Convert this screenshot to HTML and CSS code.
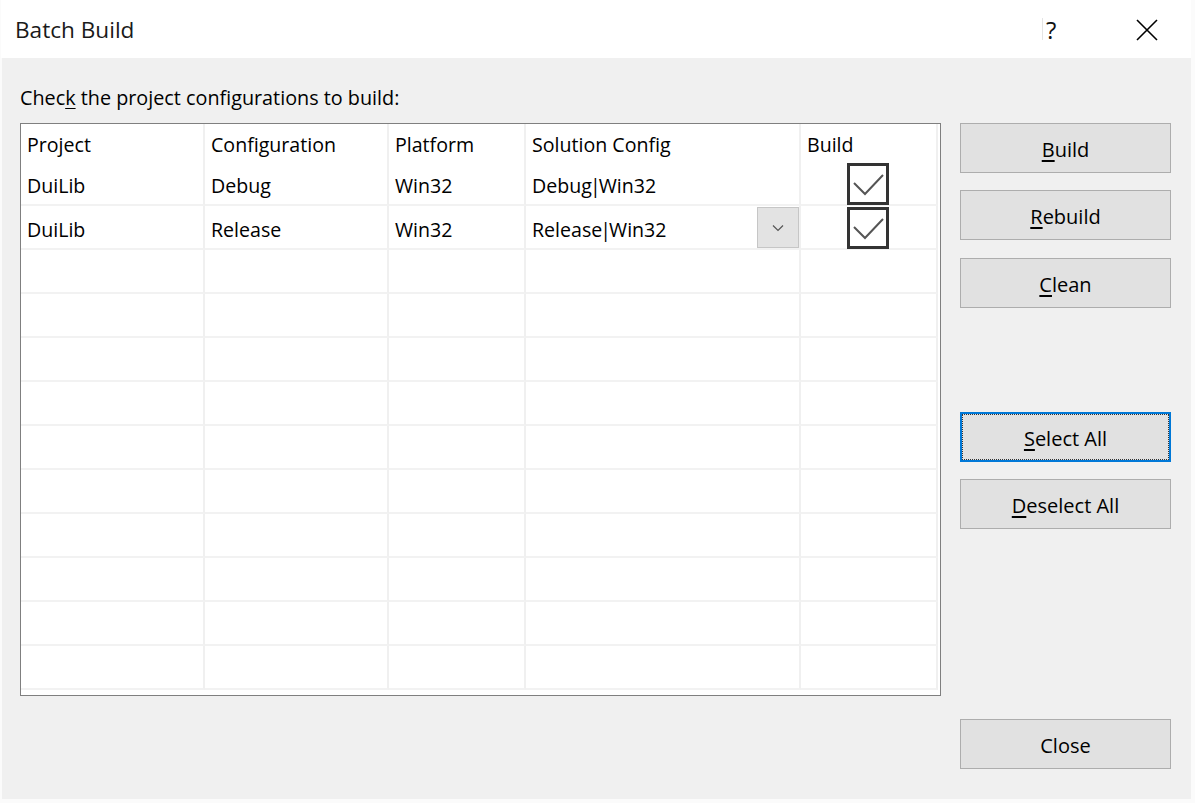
FILE: index.html
```html
<!DOCTYPE html>
<html>
<head>
<meta charset="utf-8">
<link rel="stylesheet" href="styles.css">
</head>
<body>
<div class="window">
  <div class="titlebar">
    <span class="title">Batch Build</span>
    <div class="controls">
      <span class="help-sep"></span>
      <span class="help">?</span>
      <span class="close-x">
        <svg width="22" height="22" viewBox="0 0 22 22"><path d="M1 1 L21 21 M21 1 L1 21" stroke="#000" stroke-width="1.6" fill="none"/></svg>
      </span>
    </div>
  </div>
  <div class="content">
    <div class="main">
      <div class="prompt">Chec<u>k</u> the project configurations to build:</div>
      <div class="grid">
        <div class="cell head">Project</div>
        <div class="cell head">Configuration</div>
        <div class="cell head">Platform</div>
        <div class="cell head">Solution Config</div>
        <div class="cell head">Build</div>

        <div class="cell">DuiLib</div>
        <div class="cell">Debug</div>
        <div class="cell">Win32</div>
        <div class="cell">Debug<span class="pipe">|</span>Win32</div>
        <div class="cell check-cell"><span class="checkbox"><svg width="36" height="36" viewBox="0 0 36 36"><path d="M4 17 L15 28 L33 9" stroke="#555" stroke-width="2" fill="none"/></svg></span></div>

        <div class="cell">DuiLib</div>
        <div class="cell">Release</div>
        <div class="cell">Win32</div>
        <div class="cell combo">Release<span class="pipe">|</span>Win32<span class="drop"><svg width="12" height="8" viewBox="0 0 12 8"><path d="M1 1.5 L6 6.5 L11 1.5" stroke="#555" stroke-width="1.2" fill="none"/></svg></span></div>
        <div class="cell check-cell"><span class="checkbox"><svg width="36" height="36" viewBox="0 0 36 36"><path d="M4 17 L15 28 L33 9" stroke="#555" stroke-width="2" fill="none"/></svg></span></div>

        <div class="cell"></div><div class="cell"></div><div class="cell"></div><div class="cell"></div><div class="cell"></div>
        <div class="cell"></div><div class="cell"></div><div class="cell"></div><div class="cell"></div><div class="cell"></div>
        <div class="cell"></div><div class="cell"></div><div class="cell"></div><div class="cell"></div><div class="cell"></div>
        <div class="cell"></div><div class="cell"></div><div class="cell"></div><div class="cell"></div><div class="cell"></div>
        <div class="cell"></div><div class="cell"></div><div class="cell"></div><div class="cell"></div><div class="cell"></div>
        <div class="cell"></div><div class="cell"></div><div class="cell"></div><div class="cell"></div><div class="cell"></div>
        <div class="cell"></div><div class="cell"></div><div class="cell"></div><div class="cell"></div><div class="cell"></div>
        <div class="cell"></div><div class="cell"></div><div class="cell"></div><div class="cell"></div><div class="cell"></div>
        <div class="cell"></div><div class="cell"></div><div class="cell"></div><div class="cell"></div><div class="cell"></div>
        <div class="cell"></div><div class="cell"></div><div class="cell"></div><div class="cell"></div><div class="cell"></div>
      </div>
    </div>
    <div class="side">
      <button class="btn btn-build"><u>B</u>uild</button>
      <button class="btn btn-rebuild"><u>R</u>ebuild</button>
      <button class="btn btn-clean"><u>C</u>lean</button>
      <button class="btn btn-select focused"><u>S</u>elect All</button>
      <button class="btn btn-deselect"><u>D</u>eselect All</button>
      <button class="btn btn-close">Close</button>
    </div>
  </div>
</div>
</body>
</html>
```

FILE: styles.css
```css
* { box-sizing: border-box; }
html, body {
  margin: 0;
  padding: 0;
  background: #fbfbfb;
}
body {
  width: 1195px;
  height: 803px;
  overflow: hidden;
  font-family: "Open Sans", "Noto Sans", sans-serif;
  color: #000;
}
.window {
  width: 1190px;
  margin-left: 1px;
  display: flex;
  flex-direction: column;
}
.titlebar {
  height: 58px;
  background: #fff;
  display: flex;
  align-items: center;
  padding-left: 14px;
}
.title {
  font-size: 22.6px;
  color: #1a1a1a;
  margin-top: 1px;
}
.controls {
  margin-left: auto;
  display: flex;
  align-items: center;
  height: 100%;
}
.help-sep {
  width: 1px;
  height: 22px;
  background: #e4e4e4;
  margin-right: 3px;
}
.help {
  font-size: 24px;
  width: 20px;
  margin-right: 70px;
  color: #111;
}
.close-x {
  display: flex;
  margin-right: 33px;
  margin-top: 1px;
}
.content {
  height: 741px;
  background: #f0f0f0;
  display: flex;
  margin-left: 1px;
  padding-left: 18px;
}
.main {
  padding-top: 28px;
  width: 921px;
}
.prompt {
  font-size: 19.8px;
  line-height: 24px;
  height: 24px;
  margin-bottom: 13px;
  padding-left: 0;
}
.prompt u { text-underline-offset: 3px; }
.grid {
  width: 921px;
  height: 573px;
  border: 1px solid #7f7f7f;
  background: #fff;
  display: grid;
  grid-template-columns: 184px 184px 137px 275px 137px;
  grid-template-rows: 38px repeat(12, 44px);
  align-content: start;
}
.cell {
  border-right: 2px solid #f0f0f0;
  border-bottom: 2px solid #f2f2f2;
  font-size: 19.6px;
  display: flex;
  align-items: center;
  padding-left: 6px;
  padding-top: 4px;
  white-space: nowrap;
  color: #000;
}
.pipe {
  margin: 0 -2px;
}
.cell.head {
  border-bottom: none;
  padding-top: 2px;
}
.check-cell {
  justify-content: center;
  padding-left: 0;
  padding-top: 0;
  padding-right: 2px;
}
.checkbox {
  width: 42px;
  height: 42px;
  border: 3px solid #333;
  display: flex;
  margin-top: 1px;
}
.combo {
  position: relative;
}
.drop {
  position: absolute;
  right: 0;
  top: 1px;
  width: 42px;
  height: 41px;
  background: #e3e3e3;
  border: 1px solid #c6c6c6;
  display: flex;
  align-items: center;
  justify-content: center;
}
.side {
  display: flex;
  flex-direction: column;
  padding-top: 65px;
  margin-left: 19px;
  width: 211px;
}
.btn {
  width: 211px;
  height: 50px;
  background: #e1e1e1;
  border: 1px solid #adadad;
  font-family: "Open Sans", "Noto Sans", sans-serif;
  font-size: 20px;
  color: #000;
  padding: 2px 0 0 0;
  position: relative;
}
.btn u { text-underline-offset: 3px; }
.btn-rebuild { margin-top: 17px; }
.btn-clean { margin-top: 18px; }
.btn-select { margin-top: 104px; }
.btn-deselect { margin-top: 17px; }
.btn-close { margin-top: 190px; }
.focused {
  border: 2px solid #0078d7;
}
.focused::after {
  content: "";
  position: absolute;
  inset: 0;
  border: 1px dotted #333;
}
```
